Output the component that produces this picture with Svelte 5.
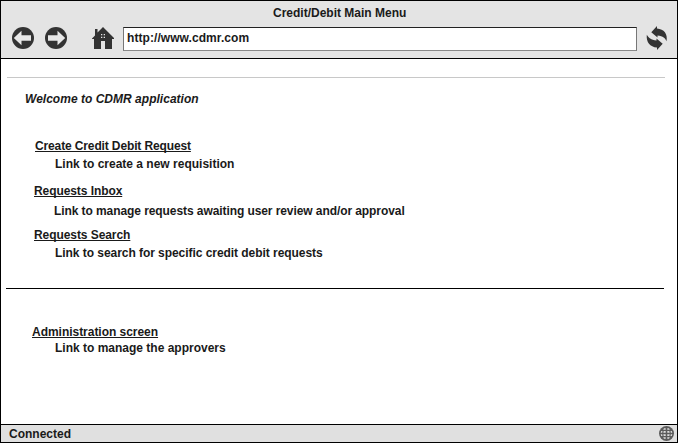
<script>
  const links = [
    { title: 'Create Credit Debit Request', note: 'Link to create a new requisition', x: 35, nx: 55, gap: 31, step: 2, ls: -0.13, nls: 0 },
    { title: 'Requests Inbox', note: 'Link to manage requests awaiting user review and/or approval', x: 34, nx: 54, gap: 11, step: 4, ls: -0.08, nls: -0.08 },
    { title: 'Requests Search', note: 'Link to search for specific credit debit requests', x: 34, nx: 55, gap: 8, step: 2, ls: -0.07, nls: -0.05 }
  ];
</script>

<div class="window">
  <header>
    <div class="title"><span>Credit/Debit Main Menu</span></div>
    <div class="toolbar">
      <svg class="back" width="22" height="22" viewBox="0 0 22 22"><circle cx="11" cy="11" r="11" fill="#333" /><path d="M1.8 11 9.5 3.7V8.2H19V13.8H9.5V18.3Z" fill="#e8e8e8" /></svg>
      <svg class="forward" width="22" height="22" viewBox="0 0 22 22"><circle cx="11" cy="11" r="11" fill="#333" /><path d="M20.2 11 12.5 3.7V8.2H3V13.8H12.5V18.3Z" fill="#e8e8e8" /></svg>
      <svg class="home" width="22" height="22" viewBox="0 0 22 22"><path d="M0 11.5 3 8.5V2H5.500V5.5L11 0 22 11V12H20V22H13V14H9V22H2V12H0Z" fill="#333" /><path d="M9 7h1.3v1.3H9zM11.7 7H13v1.3h-1.3zM9 9.7h1.3V11H9zM11.7 9.7H13V11h-1.3z" fill="#e4e4e4" /></svg>
      <div class="address"><span>http://www.cdmr.com</span></div>
      <svg class="refresh" width="20" height="24" viewBox="0 0 20 24"><path d="M4.3 6.200 10 0V2.500C17 3 21 8 19.500 15.300C18.500 12.500 16 10 10.500 9.500V11.500Z" fill="#333" /><path d="M15.700 17.800 10 24V21.500C3 21-1 16-.2 8.700C1.500 11.500 4 14 9.500 14.500V12.500Z" fill="#333" /></svg>
    </div>
  </header>
  <main>
    <div class="rule light"></div>
    <div class="welcome"><span>Welcome to CDMR application</span></div>
    {#each links as l}
      <div class="line" style="margin-top:{l.gap}px;padding-left:{l.x - 1}px"><a href="#top" style="letter-spacing:{l.ls}px">{l.title}</a></div>
      <div class="line" style="margin-top:{l.step}px;padding-left:{l.nx - 1}px"><span style="letter-spacing:{l.nls}px">{l.note}</span></div>
    {/each}
    <div class="rule dark"></div>
    <div class="line admin"><a href="#top">Administration screen</a></div>
    <div class="line adminnote"><span>Link to manage the approvers</span></div>
  </main>
  <footer>
    <span>Connected</span>
    <svg width="15" height="15" viewBox="0 0 15 15"><circle cx="7.500" cy="7.500" r="7.500" fill="#5c5c5c" /><path d="M5 2.200H6.700V3.800H4.200ZM8.300 2.200H10L10.800 3.800H8.300ZM2.200 5H3.500L3.200 6.800H1.700ZM4.700 5H6.700V6.800H4.300ZM8.300 5H10.300L10.700 6.800H8.300ZM11.500 5H12.800L13.300 6.800H11.800ZM1.700 8.200H3.200L3.500 10H2.200ZM4.300 8.200H6.700V10H4.700ZM8.300 8.200H10.700L10.300 10H8.300ZM11.800 8.200H13.300L12.800 10H11.500ZM4.200 11.200H6.700V12.800H5ZM8.300 11.200H10.800L10 12.800H8.300Z" fill="#dedede" /></svg>
  </footer>
</div>

<style>
  :global(body) { background: #fff; }
  .window {
    box-sizing: border-box; width: 678px; height: 443px; border: 1px solid #000;
    display: flex; flex-direction: column; background: #fff; color: #1a1a1a;
    font: bold 12px/16px "Liberation Sans", Arial, sans-serif; white-space: nowrap;
  }
  svg { display: block; flex: none; }
  header { height: 57px; background: #e4e4e4; border-bottom: 1px solid #000; }
  .title { height: 16px; padding: 4px 0 0 272px; }
  .toolbar { display: flex; align-items: flex-start; padding-top: 6px; }
  .back { margin-left: 11px; }
  .forward { margin-left: 11px; }
  .home { margin-left: 25px; }
  .address {
    box-sizing: border-box; width: 514px; height: 24px; margin-left: 9px; padding: 2px 3px;
    background: #fff; border: 1px solid #777; border-top-color: #222; border-bottom-color: #888; letter-spacing: .07px;
  }
  .refresh { margin: -1px 0 0 10px; overflow: visible; }
  main { flex: 1; display: flex; flex-direction: column; }
  .rule { height: 1px; width: 658px; flex: none; }
  .light { margin: 18px 0 0 6px; background: #c8c8c8; }
  .welcome { font-style: italic; padding-left: 24px; margin-top: 13px; height: 16px; letter-spacing: .02px; }
  .line { height: 16px; }
  a { color: inherit; text-decoration: underline 1px; text-underline-offset: 1px; text-decoration-skip-ink: none; }
  .dark { margin: 27px 0 0 5px; background: #000; }
  .admin { margin-top: 35px; padding-left: 31px; letter-spacing: -.03px; }
  .adminnote { padding-left: 54px; }
  footer {
    height: 17px; border-top: 1px solid #000; background: #e0e0e0;
    display: flex; justify-content: space-between; padding: 0 3px 0 8px; align-items: center;
  }
</style>
